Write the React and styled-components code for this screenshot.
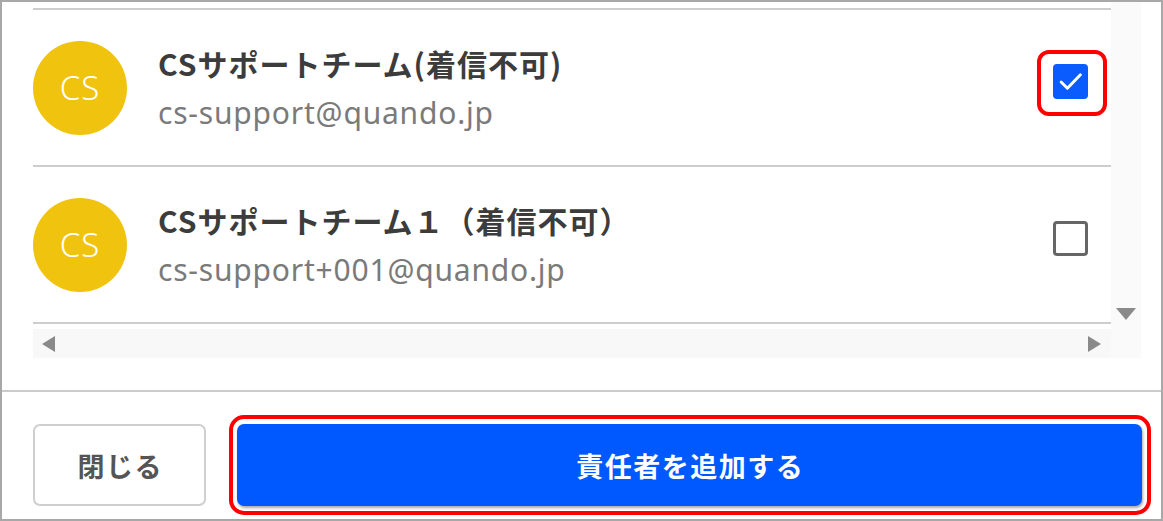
import styled, { createGlobalStyle } from "styled-components";

const GlobalStyle = createGlobalStyle`
  html, body {
    margin: 0;
    padding: 0;
    background: #ffffff;
  }
  body {
    font-family: "Noto Sans CJK JP", "Noto Sans", sans-serif;
  }
`;

const Frame = styled.div`
  width: 1163px;
  height: 521px;
  box-sizing: border-box;
  border: 2px solid #a8a8a8;
  display: flex;
  flex-direction: column;
  background: #fff;
  overflow: hidden;
`;

const ListArea = styled.div`
  height: 390px;
  flex-shrink: 0;
  box-sizing: border-box;
  border-bottom: 2px solid #cbcbcb;
  padding-left: 31px;
`;

const ScrollBox = styled.div`
  width: 1108px;
  height: 356px;
  display: grid;
  grid-template-columns: 1fr 30px;
  grid-template-rows: 1fr 29px;
`;

const List = styled.div`
  padding-top: 6px;
  overflow: hidden;
`;

const Row = styled.div`
  display: flex;
  align-items: center;
  height: 155px;
  border-top: 2px solid #cdcdcd;
  &:last-child {
    height: 6px;
  }
`;

const Avatar = styled.div`
  width: 94px;
  height: 94px;
  border-radius: 50%;
  background: #f0c30f;
  color: #fff;
  font-family: "Noto Sans", sans-serif;
  font-size: 33px;
  font-weight: 300;
  letter-spacing: 1px;
  display: flex;
  align-items: center;
  justify-content: center;
  flex-shrink: 0;
`;

const Info = styled.div`
  margin-left: 31px;
  flex: 1;
  display: flex;
  flex-direction: column;
  gap: 10px;
`;

const Name = styled.div`
  font-size: 30px;
  font-weight: 700;
  letter-spacing: 1px;
  color: #3c3c3c;
  line-height: 40px;
`;

const Email = styled.div`
  font-family: "Noto Sans", sans-serif;
  font-size: 30px;
  letter-spacing: 0.8px;
  color: #7a7a7a;
  line-height: 40px;
`;

const CheckWrap = styled.div`
  position: relative;
  width: 35px;
  height: 35px;
  margin: 0 23px 13px 0;
  ${({ $highlight }) =>
    $highlight &&
    `
    &::after {
      content: "";
      position: absolute;
      left: -16px;
      right: -19px;
      top: -14px;
      bottom: -17px;
      border: 4px solid #ff0000;
      border-radius: 12px;
    }
  `}
`;

const Box = styled.div`
  width: 35px;
  height: 35px;
  box-sizing: border-box;
  border-radius: 4px;
  display: flex;
  align-items: center;
  justify-content: center;
  background: ${({ $checked }) => ($checked ? "#0a5cff" : "#fff")};
  border: ${({ $checked }) => ($checked ? "none" : "3px solid #666")};
`;

const VTrack = styled.div`
  background: #fafafa;
  display: flex;
  flex-direction: column;
  justify-content: flex-end;
  align-items: center;
  padding-bottom: 9px;
`;

const HTrack = styled.div`
  background: #f8f8f8;
  display: flex;
  align-items: center;
  justify-content: space-between;
  padding: 0 10px 0 9px;
`;

const Corner = styled.div`
  background: #fafafa;
`;

const Footer = styled.div`
  flex: 1;
  display: flex;
  align-items: flex-start;
  gap: 31px;
  padding: 32px 19px 0 31px;
`;

const Button = styled.button`
  position: relative;
  height: 82px;
  box-sizing: border-box;
  border-radius: 7px;
  font-family: "Noto Sans CJK JP", sans-serif;
  font-size: 27px;
  font-weight: 700;
  letter-spacing: 1.5px;
  text-indent: 1.5px;
  cursor: pointer;
  ${({ $primary }) =>
    $primary
      ? `
    flex: 1;
    background: #0059ff;
    color: #fff;
    border: none;
    box-shadow: 1px 2px 3px rgba(0, 0, 0, 0.35);
    &::after {
      content: "";
      position: absolute;
      inset: -9px -9px -9px -8px;
      border: 4px solid #ff0000;
      border-radius: 15px;
      pointer-events: none;
    }
  `
      : `
    width: 173px;
    background: #fff;
    color: #555;
    border: 2px solid #cfcfcf;
  `}
`;

const people = [
  { name: "CSサポートチーム(着信不可)", email: "cs-support@quando.jp", checked: true },
  { name: "CSサポートチーム１（着信不可）", email: "cs-support+001@quando.jp", checked: false },
];

function Arrow({ dir }) {
  const points = {
    down: "0,0 20,0 10,12",
    left: "13,0 13,16 0,8",
    right: "0,0 0,16 13,8",
  }[dir];
  const size = dir === "down" ? [20, 12] : [13, 16];
  return (
    <svg width={size[0]} height={size[1]} viewBox={`0 0 ${size[0]} ${size[1]}`}>
      <polygon points={points} fill="#8a8a8a" />
    </svg>
  );
}

export default function App() {
  return (
    <>
      <GlobalStyle />
      <Frame>
        <ListArea>
          <ScrollBox>
            <List>
              {people.map((p) => (
                <Row key={p.email}>
                  <Avatar>CS</Avatar>
                  <Info>
                    <Name>{p.name}</Name>
                    <Email>{p.email}</Email>
                  </Info>
                  <CheckWrap $highlight={p.checked}>
                    <Box $checked={p.checked}>
                      {p.checked && (
                        <svg width="25" height="25" viewBox="0 0 24 24">
                          <path
                            d="M3 12.5l6 6L21.5 5.5"
                            fill="none"
                            stroke="#fff"
                            strokeWidth="2.8"
                            strokeLinecap="round"
                            strokeLinejoin="round"
                          />
                        </svg>
                      )}
                    </Box>
                  </CheckWrap>
                </Row>
              ))}
              <Row />
            </List>
            <VTrack>
              <Arrow dir="down" />
            </VTrack>
            <HTrack>
              <Arrow dir="left" />
              <Arrow dir="right" />
            </HTrack>
            <Corner />
          </ScrollBox>
        </ListArea>
        <Footer>
          <Button>閉じる</Button>
          <Button $primary>責任者を追加する</Button>
        </Footer>
      </Frame>
    </>
  );
}
